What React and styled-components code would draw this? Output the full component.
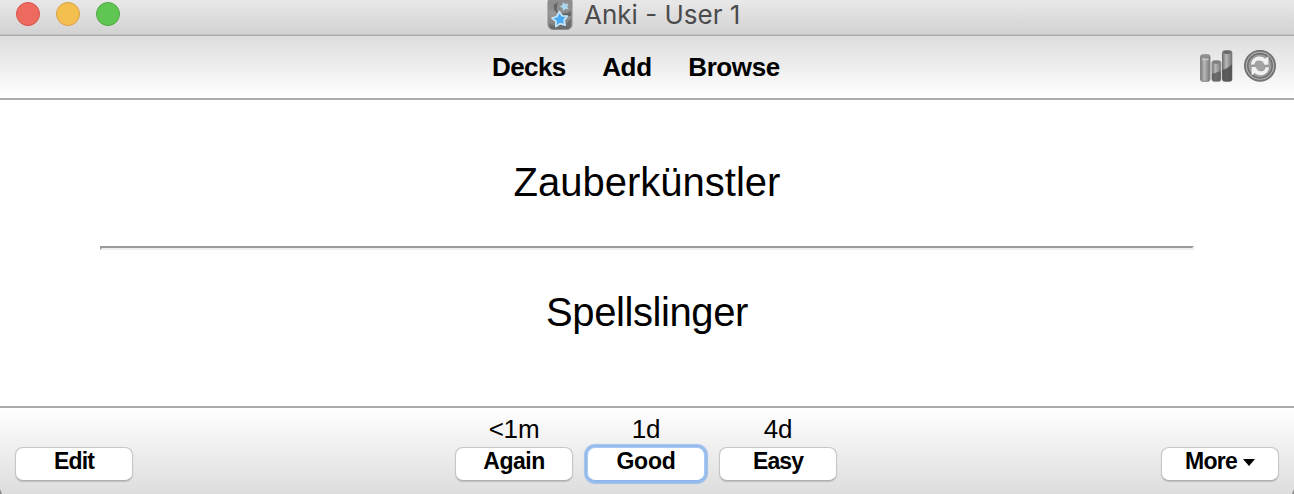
import React from "react";
import styled, { createGlobalStyle } from "styled-components";

const GlobalStyle = createGlobalStyle`
  * { box-sizing: border-box; }
  body { margin: 0; background: #fff; }
`;

const Window = styled.main`
  position: relative;
  display: flex;
  flex-direction: column;
  height: 494px;
  overflow: hidden;
  color: #000;
  background: #fff;
  font-family: "Liberation Sans", Arial, Helvetica, sans-serif;
`;

const TitleBar = styled.header`
  display: grid;
  grid-template-columns: 547px 1fr;
  height: 36px;
  background: linear-gradient(#e8e8e8, #d2d2d2);
  border-bottom: 1px solid #acacac;
  box-shadow: inset 0 -1px #c0c0c0;
`;

const Lights = styled.div`
  display: flex;
  gap: 16px;
  padding: 2px 0 0 16px;
`;

const Light = styled.span`
  width: 24px;
  height: 24px;
  border: 1px solid ${(p) => p.$edge};
  border-radius: 50%;
  background: ${(p) => p.$fill};
`;

const Title = styled.div`
  display: flex;
  gap: 11px;
  color: #4b4b4b;
  font: 400 26px/30px Inter, "Liberation Sans", sans-serif;
  white-space: nowrap;
`;

const Toolbar = styled.div`
  display: flex;
  justify-content: space-between;
  height: 64px;
  padding: 14px 17px 0 492px;
  background: linear-gradient(#dddddd, #ffffff);
  border-bottom: 2px solid #aaaaaa;
`;

const Nav = styled.nav`
  display: flex;
  gap: 36.5px;
  font-size: 26px;
  line-height: 34px;
  font-weight: 700;
`;

const NavLink = styled.span`
  letter-spacing: ${(p) => p.$tracking || "0"};
`;

const Tools = styled.div`
  display: flex;
  gap: 11px;
`;

const Icon = styled.svg`
  flex: none;
  filter: blur(0.4px);
`;

const Card = styled.section`
  display: flex;
  flex-direction: column;
  height: 306px;
  padding: 59px 100px 0;
  font-size: 40px;
  line-height: 46px;
  text-align: center;
`;

const Face = styled.div`
  letter-spacing: ${(p) => p.$tracking || "0"};
`;

const Divider = styled.hr`
  width: 1094px;
  height: 4px;
  margin: 41px 0 39px;
  border: 2px solid;
  border-color: #9a9a9a #eeeeee #eeeeee #9a9a9a;
`;

const BottomBar = styled.footer`
  display: flex;
  justify-content: space-between;
  height: 88px;
  padding: 6px 15px 0;
  background: linear-gradient(#ffffff, #dddddd);
  border-top: 2px solid #aaaaaa;
`;

const Answers = styled.div`
  display: flex;
  gap: 14px;
  margin-right: 2px;
`;

const Answer = styled.div`
  display: flex;
  flex-direction: column;
  width: 118px;
`;

const Interval = styled.span`
  height: 33px;
  font-size: 26px;
  line-height: 30px;
  text-align: center;
  letter-spacing: -0.2px;
`;

const Button = styled.button`
  display: flex;
  justify-content: center;
  align-items: flex-start;
  gap: 6px;
  width: 118px;
  height: 34px;
  margin: ${(p) => (p.$side ? "33px 0 0" : "0")};
  padding: 0;
  border: 1px solid ${(p) => (p.$focused ? "#a9c9f3" : "#c6c6c6")};
  border-bottom-color: ${(p) => (p.$focused ? "#8ab4ec" : "#b0b0b0")};
  border-radius: 8px;
  outline: none;
  background: #fff;
  box-shadow: ${(p) =>
    p.$focused ? "0 0 0 2px #94bbec, 0 0 1px 3px #a0c1ea" : "0 1px 1px rgba(0,0,0,.16)"};
  color: #000;
  font: 700 23px/26px "Liberation Sans", Arial, sans-serif;
  letter-spacing: ${(p) => p.$tracking || "-0.5px"};
`;

const CornerEdge = styled.span`
  position: absolute;
  bottom: 0;
  ${(p) => p.$side}: 0;
  width: 2px;
  height: 5px;
  background: #8c8c8c;
  clip-path: ${(p) =>
    p.$side === "left" ? "polygon(0 0, 100% 100%, 0 100%)" : "polygon(100% 0, 100% 100%, 0 100%)"};
`;

const AppIcon = () => (
  <Icon width="26" height="31" viewBox="0 0 26 31">
    <defs>
      <linearGradient id="tile" x2="0" y2="1">
        <stop stopColor="#777" />
        <stop offset=".5" stopColor="#999" />
        <stop offset="1" stopColor="#777" />
      </linearGradient>
    </defs>
    <rect x="1" y="-3" width="24" height="32.5" rx="5" fill="url(#tile)" stroke="#8a8a8a" />
    <path d="M24.5 10Q20 15 13 12Q8 10 11 3Q4 3 2 10V-2H24.5Z" fill="#8e8e8e" />
    <path d="M11 2Q7 12 14 13Q20 14 24 11V16Q18 17 13 14Q6 13 7 5Z" fill="#555" opacity=".75" />
    <path d="M2 24Q10 28 20 23L24 18V25Q24 29 20 29H6Q2 29 2 24Z" fill="#606060" opacity=".6" />
    <path d="m12.3 11.5 2.8 4.3 5.2.3-3.3 4.3 1.2 4.8-4.9-1.6-4.4 2.8.1-5-4-3.3 4.9-1.6Z" fill="#49a9f2" stroke="#c3e3f8" strokeWidth="1.8" strokeLinejoin="round" />
    <path d="m16.3 2.7 2 1.7 2.7-.4-1.1 2.5 1.2 2.4-2.8-.4-1.9 1.9-.5-2.7-2.5-1.2 2.5-1.3Z" fill="#a8d9f4" stroke="#b9d9e8" strokeWidth=".8" />
  </Icon>
);

const StatsIcon = () => (
  <Icon width="33" height="34" viewBox="0 0 33 34">
    <defs>
      <linearGradient id="bar">
        <stop stopColor="#777" />
        <stop offset=".4" stopColor="#b8b8b8" />
        <stop offset="1" stopColor="#777" />
      </linearGradient>
    </defs>
    <rect x=".5" y="4.8" width="9.5" height="26.5" rx="2" fill="url(#bar)" stroke="#888" />
    <ellipse cx="5.2" cy="6.6" rx="3.8" ry="1.6" fill="#8f8f8f" />
    <path d="M2 9.5H8.6" stroke="#c5c5c5" strokeWidth="1.5" />
    <rect x="12" y="10.8" width="8.8" height="20.5" rx="2" fill="url(#bar)" stroke="#888" />
    <path d="M12 24 20.7 21V29Q20.7 31 18.5 31H14Q12 31 12 29Z" fill="#555" opacity=".75" />
    <ellipse cx="16.4" cy="12.4" rx="3.5" ry="1.4" fill="#7d7d7d" />
    <rect x="22.5" y=".8" width="9.3" height="30.5" rx="2" fill="url(#bar)" stroke="#707070" />
    <path d="M22.5 20Q29 18 31.8 14V29Q31.8 31 29.5 31H24.5Q22.5 31 22.5 29Z" fill="#484848" opacity=".8" />
    <ellipse cx="27.1" cy="2.5" rx="3.6" ry="1.4" fill="#666" />
  </Icon>
);

const SyncIcon = () => (
  <Icon width="33" height="34" viewBox="0 0 33 34">
    <circle cx="16" cy="15.8" r="15" fill="#b5b5b5" stroke="#757575" strokeWidth="2" />
    <circle cx="16" cy="15.8" r="12.2" fill="#9d9d9d" stroke="#707070" strokeWidth="1.6" />
    <path d="M7 14.5C8 6.3 16.5 4.5 21.2 8.7L24.4 6.2V14.7H16.2L19 11.8C15 9.2 10.8 10.2 10.5 14.5Z" fill="#f1f1f1" />
    <path d="M25 17.2C24 25.5 15.5 27.2 10.8 23L7.6 25.5V17H15.8L13 19.9C17 22.5 21.2 21.5 21.5 17.2Z" fill="#f1f1f1" />
    <circle cx="16" cy="15.8" r="4.5" fill="#a3a3a3" />
  </Icon>
);

const Caret = styled.span`
  align-self: flex-start;
  width: 0;
  height: 0;
  margin-top: 11px;
  border: 6.5px solid transparent;
  border-top: 7px solid #000;
  border-bottom: 0;
`;

export default function App() {
  return (
    <>
      <GlobalStyle />
      <Window>
        <TitleBar>
          <Lights>
            <Light $fill="#ee6a5f" $edge="#d9514a" />
            <Light $fill="#f5bf4f" $edge="#d6a043" />
            <Light $fill="#5fc553" $edge="#50a643" />
          </Lights>
          <Title>
            <AppIcon />
            <span>Anki - User 1</span>
          </Title>
        </TitleBar>
        <Toolbar>
          <Nav>
            <NavLink $tracking="-0.6px">Decks</NavLink>
            <NavLink $tracking="-0.3px">Add</NavLink>
            <NavLink $tracking="-0.4px">Browse</NavLink>
          </Nav>
          <Tools>
            <StatsIcon />
            <SyncIcon />
          </Tools>
        </Toolbar>
        <Card>
          <Face>Zauberkünstler</Face>
          <Divider />
          <Face $tracking="-0.4px">Spellslinger</Face>
        </Card>
        <BottomBar>
          <Button $side $tracking="-0.8px">Edit</Button>
          <Answers>
            <Answer>
              <Interval>&lt;1m</Interval>
              <Button>Again</Button>
            </Answer>
            <Answer>
              <Interval>1d</Interval>
              <Button $focused $tracking="-0.2px">Good</Button>
            </Answer>
            <Answer>
              <Interval>4d</Interval>
              <Button $tracking="-0.9px">Easy</Button>
            </Answer>
          </Answers>
          <Button $side $tracking="-0.7px">
            More
            <Caret />
          </Button>
        </BottomBar>
        <CornerEdge $side="left" />
        <CornerEdge $side="right" />
      </Window>
    </>
  );
}
